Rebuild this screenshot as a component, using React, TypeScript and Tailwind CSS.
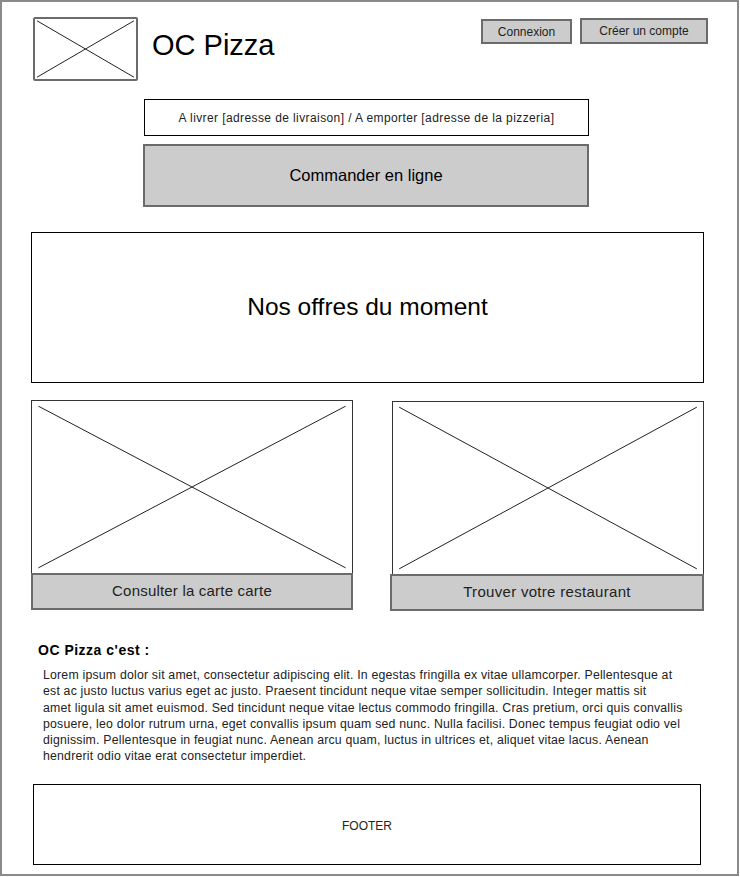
import React from "react"

function Placeholder({ className }: { className?: string }) {
  return (
    <div className={"relative bg-white " + (className ?? "")}>
      <svg className="absolute inset-0 h-full w-full" preserveAspectRatio="none" viewBox="0 0 100 100">
        <line x1="2" y1="3" x2="98" y2="97" stroke="#222" strokeWidth="1" vectorEffect="non-scaling-stroke" />
        <line x1="98" y1="3" x2="2" y2="97" stroke="#222" strokeWidth="1" vectorEffect="non-scaling-stroke" />
      </svg>
    </div>
  )
}

export default function App() {
  return (
    <div
      className="w-[739px] h-[876px] bg-white border-2 border-[#8a8a8a] text-[#1a1a1a] overflow-hidden"
      style={{ fontFamily: '"Liberation Sans", Arial, sans-serif' }}
    >
      {/* Header */}
      <div className="flex items-start pt-[15px] pl-[31px] pr-[29px]">
        <Placeholder className="w-[105px] h-[64px] border-2 border-[#6b6b6b] rounded-[2px]" />
        <div className="ml-[14px] mt-[8px] text-[29px] leading-[40px] text-black">OC Pizza</div>
        <div className="ml-auto flex gap-[8px] mt-[1px]">
          <button className="w-[91px] h-[25px] mt-[1px] bg-[#cccccc] border-2 border-[#6b6b6b] text-[12px] text-[#222]">
            Connexion
          </button>
          <button className="w-[128px] h-[26px] bg-[#cccccc] border-2 border-[#6b6b6b] text-[12px] text-[#222] leading-[20px]">
            Créer un compte
          </button>
        </div>
      </div>

      {/* Order block */}
      <div className="ml-[141px] mt-[18px] w-[446px] flex flex-col gap-[8px]">
        <div className="ml-[1px] h-[37px] border border-black flex items-center justify-center text-[12px] tracking-[0.4px] text-[#222]">
          A livrer [adresse de livraison] / A emporter [adresse de la pizzeria]
        </div>
        <div className="h-[63px] bg-[#cccccc] border-2 border-[#6b6b6b] flex items-center justify-center text-[16.5px] text-black">
          Commander en ligne
        </div>
      </div>

      {/* Offers */}
      <div className="ml-[29px] mt-[25px] w-[673px] h-[151px] border border-black flex items-center justify-center text-[24.5px] text-black">
        Nos offres du moment
      </div>

      {/* Cards */}
      <div className="ml-[29px] mt-[17px] flex items-start">
        <div className="w-[322px] flex flex-col">
          <Placeholder className="h-[173px] border-x border-t border-[#333]" />
          <div className="h-[37px] bg-[#cccccc] border-2 border-[#6b6b6b] flex items-center justify-center text-[15px] tracking-[0.2px] text-[#222]">
            Consulter la carte carte
          </div>
        </div>
        <div className="ml-[37px] w-[314px] flex flex-col mt-[1px]">
          <Placeholder className="ml-[2px] h-[173px] border-x border-t border-[#333]" />
          <div className="h-[37px] bg-[#cccccc] border-2 border-[#6b6b6b] flex items-center justify-center text-[15px] tracking-[0.3px] text-[#222]">
            Trouver votre restaurant
          </div>
        </div>
      </div>

      {/* About */}
      <div className="ml-[36px] mt-[31px] text-[14px] tracking-[0.5px] font-bold text-black leading-[16px]">OC Pizza c'est :</div>
      <p className="ml-[41px] mt-[9px] text-[12.3px] tracking-[0.2px] leading-[16.3px] text-[#222] whitespace-nowrap">
        Lorem ipsum dolor sit amet, consectetur adipiscing elit. In egestas fringilla ex vitae ullamcorper. Pellentesque at
        <br />
        est ac justo luctus varius eget ac justo. Praesent tincidunt neque vitae semper sollicitudin. Integer mattis sit
        <br />
        amet ligula sit amet euismod. Sed tincidunt neque vitae lectus commodo fringilla. Cras pretium, orci quis convallis
        <br />
        posuere, leo dolor rutrum urna, eget convallis ipsum quam sed nunc. Nulla facilisi. Donec tempus feugiat odio vel
        <br />
        dignissim. Pellentesque in feugiat nunc. Aenean arcu quam, luctus in ultrices et, aliquet vitae lacus. Aenean
        <br />
        hendrerit odio vitae erat consectetur imperdiet.
      </p>

      {/* Footer */}
      <div className="ml-[31px] mt-[19px] w-[668px] h-[81px] pt-[3px] border border-black flex items-center justify-center text-[12px] text-[#222]">
        FOOTER
      </div>
    </div>
  )
}
